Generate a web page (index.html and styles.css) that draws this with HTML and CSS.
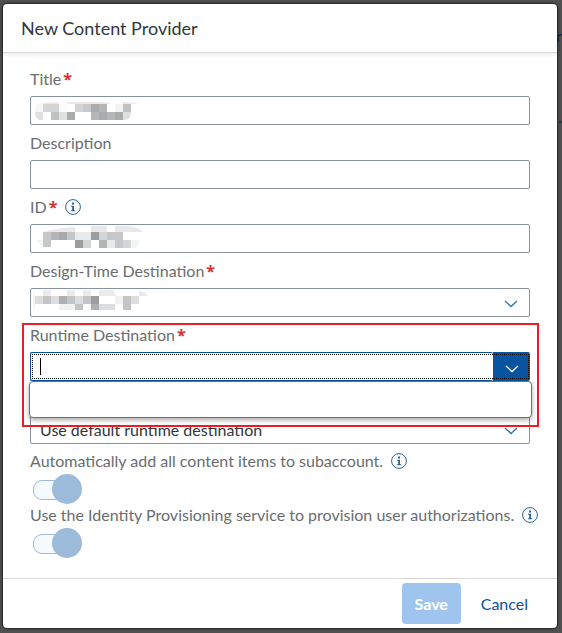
FILE: index.html
```html
<!DOCTYPE html>
<html lang="en">
<head>
	<meta charset="UTF-8">
	<title>New Content Provider</title>
	<link rel="stylesheet" href="styles.css">
</head>

<body>
	<svg class="defs" aria-hidden="true">
		<symbol id="info" viewBox="0 0 16 16">
			<circle cx="8" cy="8" r="7.4" fill="none" stroke="currentColor" stroke-width="1"/>
			<path d="M7 3.5h2v2H7zM6 6.7h3v4.6h1.2v1H5.9v-1h1.3V7.7H6z" fill="currentColor"/>
		</symbol>
		<symbol id="arrow" viewBox="0 0 14 8">
			<path d="M1 1l6 5.5L13 1" fill="none" stroke="currentColor" stroke-width="1.3"/>
		</symbol>
	</svg>

	<div class="backdrop" aria-hidden="true">
		<span class="back-text">r</span>
		<span class="back-link">.</span>
	</div>

	<form class="dialog">
		<header class="dialog-header">
			<h1>New Content Provider</h1>
		</header>

		<main class="dialog-body">
			<div class="field">
				<label for="title">Title<span class="required">*</span></label>
				<div class="control">
					<input type="text" id="title">
					<svg class="mosaic" viewBox="0 0 112 24" aria-hidden="true">
						<path d="M4 3Q12 1 24 1V3zM32 1H72L76 3H32zM88 1Q98 1 104 3H88z" fill="#e9eaeb"/>
						<path d="M1 3H8V11H0Q0 6 1 3z" fill="#f7f7f8"/>
						<path d="M8 3h16v8H8zM40 3h8v8h-8z" fill="#d3d4d5"/>
						<path d="M24 3h8v8h-8z" fill="#fafcfc"/>
						<path d="M48 3h8v8h-8z" fill="#c8c9ca"/>
						<path d="M56 3h8v8h-8zM64 11h8v8h-8zM80 11h8v8h-8zM32 11h8v8h-8z" fill="#aaabac"/>
						<path d="M64 3h8v8h-8zM56 11h8v8h-8zM72 11h8v8h-8z" fill="#b5b6b7"/>
						<path d="M80 3h8v8h-8z" fill="#f2f3f4"/>
						<path d="M88 3h8v8h-8zM16 11h8v8h-8z" fill="#c0c1c2"/>
						<path d="M0 11h8v8H4Q0 17 0 11zM24 11h8v8h-8zM88 11h8Q96 19 90 19h-2z" fill="#dfe1e1"/>
					</svg>
				</div>
			</div>

			<div class="field">
				<label for="description">Description</label>
				<div class="control">
					<input type="text" id="description">
				</div>
			</div>

			<div class="field">
				<label for="id">ID<span class="required">*</span>
					<svg class="info"><use href="#info"/></svg>
				</label>
				<div class="control">
					<input type="text" id="id">
					<svg class="mosaic" viewBox="0 0 112 24" aria-hidden="true">
						<path d="M8 3Q22 -1 40 -2V3zM56 -3h16v6H56zM80 -3h14Q106 -1 108 3H80z" fill="#e7e8e9"/>
						<path d="M2 11h6v6Q3 15 2 11zM96 11h8Q104 19 98 19h-2z" fill="#f2f3f4"/>
						<path d="M8 3h8v15H8zM32 3h8v8h-8zM72 3h16v8H72zM80 11h8v8h-8z" fill="#c6c7c8"/>
						<path d="M16 3h8v8h-8zM64 11h8v8h-8z" fill="#b3b4b5"/>
						<path d="M24 3h8v8h-8z" fill="#a8a9aa"/>
						<path d="M56 3h8v8h-8zM40 11h8v8h-8z" fill="#9c9d9f"/>
						<path d="M40 3h16v8H40zM72 11h8v8h-8z" fill="#e8ebeb"/>
						<path d="M48 11h8v8h-8zM64 3h8v8h-8zM88 11h8v8h-8z" fill="#d4d5d6"/>
					</svg>
				</div>
			</div>

			<div class="field">
				<label for="design">Design-Time Destination<span class="required">*</span></label>
				<div class="control">
					<select id="design"><option></option></select>
					<svg class="arrow"><use href="#arrow"/></svg>
					<svg class="mosaic" viewBox="0 0 112 24" aria-hidden="true">
						<path d="M8 -3h8v6H8zM32 -3h8v6h-8zM48 -3h8v6h-8zM64 -3h14l4 6H64zM104 3V-2Q113 -1 112 3z" fill="#eaebec"/>
						<path d="M0 -2Q-4 7 0 17zM24 11h16v6H24zM80 3h8v8h-8z" fill="#f0f1f1"/>
						<path d="M0 3h8v8H0zM16 3h8v8h-8zM40 3h8v8h-8zM64 11h16v6H64zM96 3h8v8h-8z" fill="#dcddde"/>
						<path d="M8 3h8v8H8zM32 3h8v8h-8zM48 3h8v8h-8zM40 11h8v6h-8zM88 3h8v8h-8zM88 11h8v6h-8z" fill="#c3c4c5"/>
						<path d="M24 3h8v8h-8zM56 11h8v6h-8z" fill="#aeafb0"/>
						<path d="M56 3h8v8h-8z" fill="#9c9d9f"/>
					</svg>
				</div>
			</div>

			<div class="field">
				<label for="runtime">Runtime Destination<span class="required">*</span></label>
				<div class="control combo">
					<input type="text" id="runtime">
					<button type="button" class="combo-button" aria-label="Show destinations">
						<svg class="combo-arrow"><use href="#arrow"/></svg>
					</button>
					<span class="caret"></span>
					<div class="popup"></div>
				</div>
				<div class="highlight"></div>
			</div>

			<div class="control default-destination">
				<select aria-label="Default runtime destination">
					<option>Use default runtime destination</option>
				</select>
				<svg class="arrow"><use href="#arrow"/></svg>
			</div>

			<div class="switch-field">
				<label for="auto-add">Automatically add all content items to subaccount.
					<svg class="info"><use href="#info"/></svg>
				</label>
				<input type="checkbox" class="switch" id="auto-add" disabled>
			</div>
			<div class="switch-field">
				<label for="identity">Use the Identity Provisioning service to provision user authorizations.
					<svg class="info"><use href="#info"/></svg>
				</label>
				<input type="checkbox" class="switch" id="identity" disabled>
			</div>
		</main>

		<footer class="dialog-footer">
			<button type="submit" class="save" disabled>Save</button>
			<button type="button" class="cancel">Cancel</button>
		</footer>
	</form>
</body>
</html>
```
FILE: styles.css
```css
*
{
	box-sizing: border-box;
	margin: 0;
	padding: 0;
}
body
{
	min-height: 100vh;
	padding: 4px 5px 5px 3px;
	display: flex;
	background: #505050;
	color: #32363a;
	font-family: Lato, "Liberation Sans", sans-serif;
	font-size: 16px;
	overflow: hidden;
}
input, select, button
{
	font: inherit;
	color: inherit;
}
.defs
{
	position: absolute;
	width: 0;
	height: 0;
}

/* page behind the dialog */
.backdrop
{
	position: absolute;
	top: 0;
	right: 0;
	color: #14243c;
}
.back-text
{
	position: absolute;
	top: 26px;
	right: 0;
}
.back-link
{
	position: absolute;
	top: 107px;
	right: 0;
}

.dialog
{
	position: relative;
	flex: 1;
	min-width: 0;
	display: flex;
	flex-direction: column;
	background: #fff;
	border-radius: 4px;
	box-shadow: 0 0 2px 1px #222;
}
.dialog-header
{
	padding: 0 18px;
	border-bottom: 1px solid #d9d9d9;
	box-shadow: 0 2px 4px rgba(0, 0, 0, 0.08);
}
.dialog-header h1
{
	font-size: 18px;
	font-weight: normal;
	line-height: 48px;
}
.dialog-body
{
	flex: 1;
	padding: 8px 27px;
}

.field
{
	position: relative;
}
label
{
	display: flex;
	align-items: center;
	line-height: 22px;
	color: #6a6d70;
	white-space: nowrap;
}
.field label
{
	padding: 7px 0 6px;
}
.required
{
	margin-left: 2px;
	color: #d22f2f;
	font-family: "Noto Sans", sans-serif;
	font-weight: bold;
}
.info
{
	flex: none;
	width: 16px;
	height: 16px;
	margin-left: 8px;
	color: #2b6292;
}
.control
{
	position: relative;
	height: 29px;
}
.control input,
.control select
{
	display: block;
	width: 100%;
	height: 100%;
	padding: 0 9px;
	border: 1px solid #89919a;
	border-radius: 2px;
	background: #fff;
	appearance: none;
	outline: none;
}
.arrow
{
	position: absolute;
	top: 12px;
	right: 12px;
	width: 14px;
	height: 8px;
	color: #3472ae;
	pointer-events: none;
}
.mosaic
{
	position: absolute;
	top: 5px;
	left: 5px;
	width: 112px;
	height: 24px;
	overflow: visible;
	pointer-events: none;
}

/* open combo box */
.combo
{
	display: flex;
}
.control.combo input
{
	flex: 1;
	width: auto;
	border-color: #0854a0;
	border-right: 0;
}
.combo-button
{
	width: 37px;
	border: 0;
	border-radius: 0 2px 2px 0;
	background: #0854a0;
	color: #fff;
}
.combo-arrow
{
	width: 14px;
	height: 8px;
}
.combo::after
{
	content: "";
	position: absolute;
	inset: 2px 1px 2px 2px;
	border: 1px dotted #000;
	pointer-events: none;
}
.caret
{
	position: absolute;
	top: 6px;
	left: 10px;
	width: 1px;
	height: 17px;
	background: #000;
}
.popup
{
	position: absolute;
	top: 100%;
	left: -1px;
	right: -2px;
	z-index: 2;
	height: 37px;
	border: 1px solid #6f7173;
	border-radius: 4px;
	background: #fff;
	box-shadow: 0 2px 5px rgba(0, 0, 0, 0.35);
}
.highlight
{
	position: absolute;
	top: 6px;
	left: -8px;
	right: -9px;
	z-index: 3;
	height: 104px;
	border: 2px solid #ed1c24;
	pointer-events: none;
}
.default-destination
{
	margin-top: 34px;
	margin-bottom: 6px;
}

.switch
{
	position: relative;
	display: block;
	width: 49px;
	height: 30px;
	margin: 2px 3px 0;
	appearance: none;
}
.switch::before
{
	content: "";
	position: absolute;
	top: 6px;
	left: 0;
	width: 40px;
	height: 18px;
	border: 1px solid #9cbad9;
	border-radius: 9px;
	background: #f5faff;
}
.switch::after
{
	content: "";
	position: absolute;
	top: 0;
	right: 0;
	width: 30px;
	height: 30px;
	border-radius: 50%;
	background: #9cbad9;
}

.dialog-footer
{
	display: flex;
	justify-content: flex-end;
	gap: 8px;
	padding: 4px 17px 4px;
	border-top: 1px solid #d9d9d9;
}
.dialog-footer button
{
	height: 41px;
	border: 0;
	border-radius: 4px;
	background: none;
	color: #0854a0;
}
.dialog-footer .save
{
	width: 59px;
	background: #9fc5ef;
	color: #fff;
	font-weight: bold;
}
.dialog-footer .cancel
{
	padding: 0 12px;
}
```
